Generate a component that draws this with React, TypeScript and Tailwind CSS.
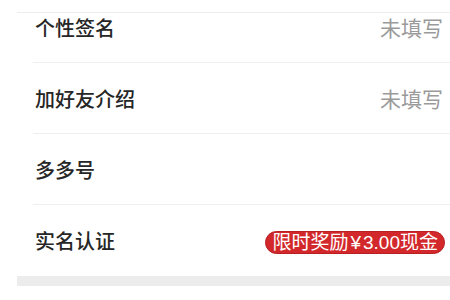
const font = "font-['Liberation_Sans','Noto_Sans_CJK_SC',sans-serif]"

type Row = { label: string; value?: string; badge?: boolean }

const rows: Row[] = [
  { label: '加好友介绍', value: '未填写' },
  { label: '多多号' },
  { label: '实名认证', badge: true },
]

function Value({ row }: { row: Row }) {
  if (row.badge) {
    return (
      <span className="h-[23px] px-[6px] flex items-center rounded-full bg-[#d2282b] border border-[#b81e22] text-white text-[19px] leading-none">
        限时奖励<span className="mx-[2px]">¥</span>3.00现金
      </span>
    )
  }
  if (row.value) return <span className="text-[21px] leading-[20px] text-[#9a9a9a]">{row.value}</span>
  return null
}

export default function App() {
  return (
    <div className={`w-[450px] h-[300px] bg-white overflow-hidden ${font}`}>
      <div className="ml-[17px] mt-[12px] border-t border-[#ededed]">
        {/* first row is cut off by the screenshot */}
        <div className="ml-[16px] h-[50px] pt-[6px] flex items-start justify-between border-b border-[#efefef] pr-[7px]">
          <span className="pl-[2px] text-[20px] leading-[20px] font-medium text-[#262626]">个性签名</span>
          <span className="text-[21px] leading-[20px] text-[#9a9a9a]">未填写</span>
        </div>
        {rows.map((row, i) => (
          <div
            key={row.label}
            className={`ml-[16px] h-[71px] pt-[3px] flex items-center justify-between ${
              row.badge ? 'pr-[5px]' : 'pr-[7px]'
            } ${i < rows.length - 1 ? 'border-b border-[#efefef]' : ''}`}
          >
            <span className="pl-[2px] text-[20px] leading-[20px] font-medium text-[#262626]">{row.label}</span>
            <Value row={row} />
          </div>
        ))}
        <div className="h-[10px] bg-[#ececec]" />
      </div>
    </div>
  )
}
